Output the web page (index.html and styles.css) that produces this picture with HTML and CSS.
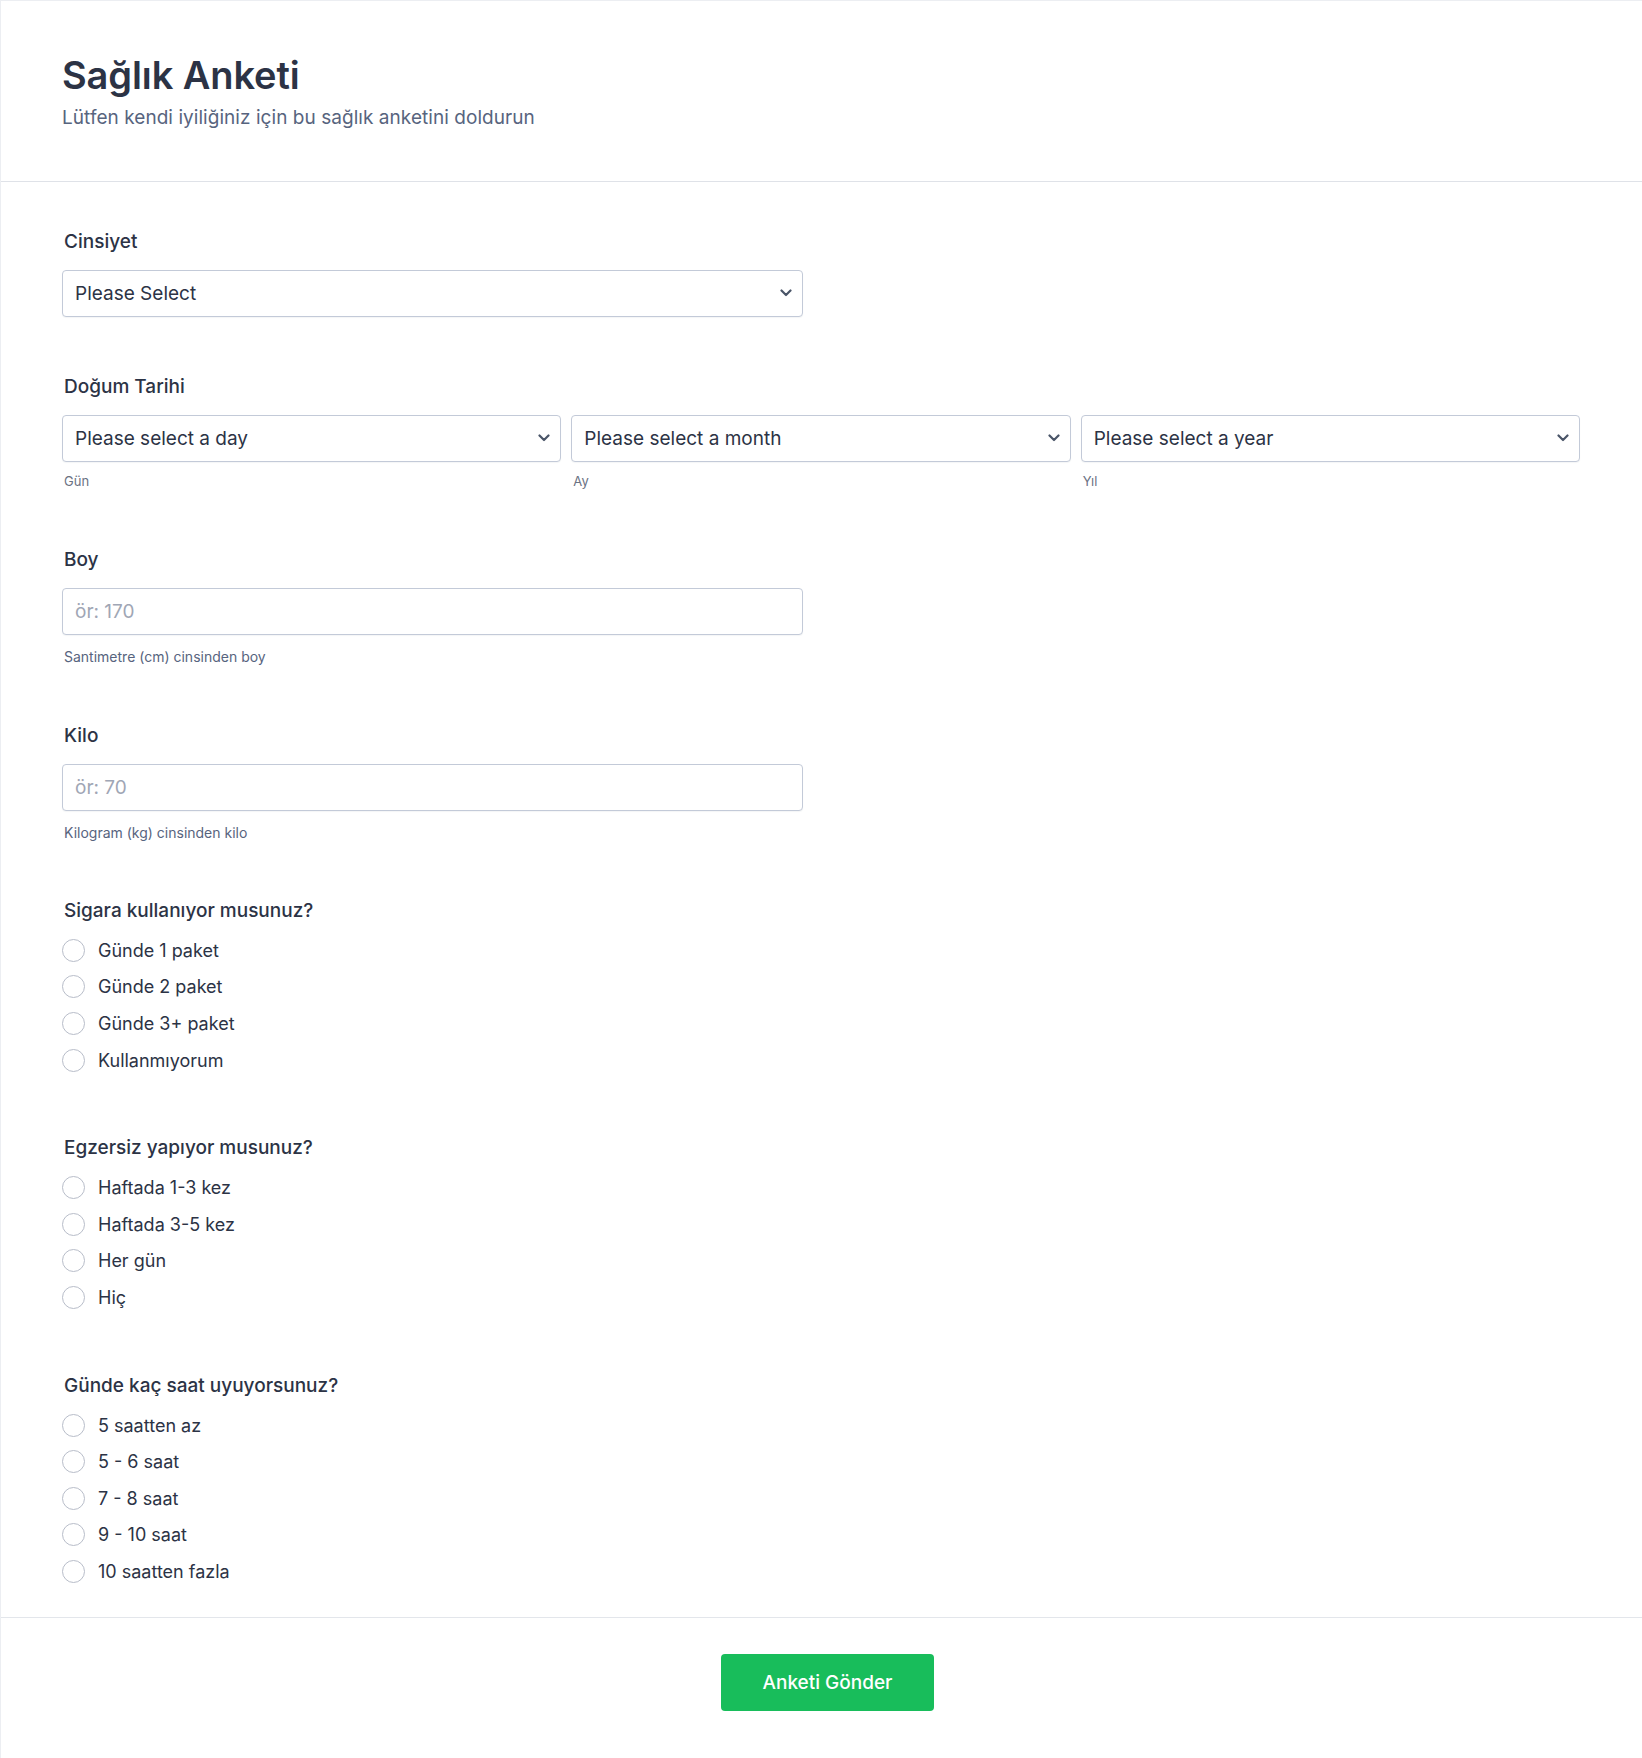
FILE: index.html
```html
<!DOCTYPE html>
<html lang="tr">
<head>
<meta charset="utf-8">
<title>Sağlık Anketi</title>
<link rel="stylesheet" href="styles.css">
</head>
<body>
<div class="survey">
  <header class="survey-header">
    <h1 class="survey-title">Sağlık Anketi</h1>
    <p class="survey-subtitle">Lütfen kendi iyiliğiniz için bu sağlık anketini doldurun</p>
  </header>

  <form class="survey-body">
    <div class="field field-first">
      <label class="field-label">Cinsiyet</label>
      <div class="select-wrap half">
        <select class="control select"><option>Please Select</option></select>
        <svg class="chevron" width="12" height="8" viewBox="0 0 12 8"><path d="M1.5 1.5 L6 6 L10.5 1.5" fill="none" stroke="#4a5568" stroke-width="2.2" stroke-linecap="round" stroke-linejoin="round"/></svg>
      </div>
    </div>

    <div class="field field-date">
      <label class="field-label">Doğum Tarihi</label>
      <div class="date-row">
        <div class="date-col">
          <div class="select-wrap">
            <select class="control select"><option>Please select a day</option></select>
            <svg class="chevron" width="12" height="8" viewBox="0 0 12 8"><path d="M1.5 1.5 L6 6 L10.5 1.5" fill="none" stroke="#4a5568" stroke-width="2.2" stroke-linecap="round" stroke-linejoin="round"/></svg>
          </div>
          <span class="sublabel">Gün</span>
        </div>
        <div class="date-col">
          <div class="select-wrap">
            <select class="control select"><option>Please select a month</option></select>
            <svg class="chevron" width="12" height="8" viewBox="0 0 12 8"><path d="M1.5 1.5 L6 6 L10.5 1.5" fill="none" stroke="#4a5568" stroke-width="2.2" stroke-linecap="round" stroke-linejoin="round"/></svg>
          </div>
          <span class="sublabel">Ay</span>
        </div>
        <div class="date-col">
          <div class="select-wrap">
            <select class="control select"><option>Please select a year</option></select>
            <svg class="chevron" width="12" height="8" viewBox="0 0 12 8"><path d="M1.5 1.5 L6 6 L10.5 1.5" fill="none" stroke="#4a5568" stroke-width="2.2" stroke-linecap="round" stroke-linejoin="round"/></svg>
          </div>
          <span class="sublabel">Yıl</span>
        </div>
      </div>
    </div>

    <div class="field field-boy">
      <label class="field-label">Boy</label>
      <input class="control input half" type="text" placeholder="ör: 170">
      <span class="help">Santimetre (cm) cinsinden boy</span>
    </div>

    <div class="field">
      <label class="field-label">Kilo</label>
      <input class="control input half" type="text" placeholder="ör: 70">
      <span class="help">Kilogram (kg) cinsinden kilo</span>
    </div>

    <div class="field field-radio">
      <label class="field-label">Sigara kullanıyor musunuz?</label>
      <div class="radio-list">
        <label class="radio-row"><input type="radio" name="sigara" class="radio"><span>Günde 1 paket</span></label>
        <label class="radio-row"><input type="radio" name="sigara" class="radio"><span>Günde 2 paket</span></label>
        <label class="radio-row"><input type="radio" name="sigara" class="radio"><span>Günde 3+ paket</span></label>
        <label class="radio-row"><input type="radio" name="sigara" class="radio"><span>Kullanmıyorum</span></label>
      </div>
    </div>

    <div class="field field-radio">
      <label class="field-label">Egzersiz yapıyor musunuz?</label>
      <div class="radio-list">
        <label class="radio-row"><input type="radio" name="egzersiz" class="radio"><span>Haftada 1-3 kez</span></label>
        <label class="radio-row"><input type="radio" name="egzersiz" class="radio"><span>Haftada 3-5 kez</span></label>
        <label class="radio-row"><input type="radio" name="egzersiz" class="radio"><span>Her gün</span></label>
        <label class="radio-row"><input type="radio" name="egzersiz" class="radio"><span>Hiç</span></label>
      </div>
    </div>

    <div class="field field-radio">
      <label class="field-label">Günde kaç saat uyuyorsunuz?</label>
      <div class="radio-list">
        <label class="radio-row"><input type="radio" name="uyku" class="radio"><span>5 saatten az</span></label>
        <label class="radio-row"><input type="radio" name="uyku" class="radio"><span>5 - 6 saat</span></label>
        <label class="radio-row"><input type="radio" name="uyku" class="radio"><span>7 - 8 saat</span></label>
        <label class="radio-row"><input type="radio" name="uyku" class="radio"><span>9 - 10 saat</span></label>
        <label class="radio-row"><input type="radio" name="uyku" class="radio"><span>10 saatten fazla</span></label>
      </div>
    </div>
  </form>

  <footer class="survey-footer">
    <button class="submit-btn" type="button">Anketi Gönder</button>
  </footer>
</div>
</body>
</html>
```
FILE: styles.css
```css
* { box-sizing: border-box; }

html, body {
  margin: 0;
  padding: 0;
  background: #ffffff;
}

body {
  font-family: Inter, "Noto Sans", "Liberation Sans", sans-serif;
  color: #2c3345;
  overflow-x: hidden;
}

.survey {
  width: 100%;
  min-height: 1758px;
  border-top: 1px solid #eceef2;
  border-left: 1px solid #eceef2;
  background: #fff;
}

.survey-header {
  padding: 51px 61px 0 61px;
  height: 181px;
  border-bottom: 1px solid #dfe2e8;
}

.survey-title {
  margin: 0;
  font-size: 38px;
  line-height: 46px;
  font-weight: 600;
  color: #2c3345;
  letter-spacing: -0.1px;
}

.survey-subtitle {
  margin: 8px 0 0 0;
  font-size: 19px;
  line-height: 24px;
  color: #57647e;
  letter-spacing: 0.05px;
}

.survey-body {
  padding: 48px 61px 27px 61px;
  border-bottom: 1px solid #e3e6eb;
}

.field {
  display: flex;
  flex-direction: column;
  align-items: flex-start;
  margin-bottom: 56px;
}
.field-first { margin-bottom: 58px; }
.field-date { margin-bottom: 59px; }
.field-boy { margin-bottom: 57px; }
.field-radio { margin-bottom: 58px; }
.field:last-child { margin-bottom: 0; }

.field-label {
  display: block;
  font-size: 19px;
  line-height: 24px;
  font-weight: 500;
  color: #2c3345;
  margin: 0 0 16px 2px;
}

.select-wrap {
  position: relative;
  width: 100%;
}
.select-wrap.half { width: 741px; }

.control {
  display: block;
  width: 100%;
  height: 47px;
  border: 1px solid #c3cad8;
  border-radius: 4px;
  background: #fff;
  padding: 0 12px;
  font-family: Inter, "Noto Sans", "Liberation Sans", sans-serif;
  font-size: 19px;
  color: #2c3345;
  outline: none;
  box-shadow: 0 1px 1px rgba(44, 51, 69, 0.05);
}

.select {
  appearance: none;
  -webkit-appearance: none;
  padding-right: 40px;
}

.input::placeholder {
  color: #a0a6b5;
}

.input.half { width: 741px; }

.chevron {
  position: absolute;
  right: 11px;
  top: 19px;
  pointer-events: none;
}

.date-row {
  display: grid;
  grid-template-columns: repeat(3, 1fr);
  column-gap: 10px;
  width: 1518px;
}

.date-col {
  display: flex;
  flex-direction: column;
}

.sublabel {
  display: block;
  margin: 11px 0 0 2px;
  font-size: 13px;
  line-height: 16px;
  color: #6b7283;
}

.help {
  display: block;
  margin: 12px 0 0 2px;
  font-size: 14px;
  line-height: 20px;
  color: #57647e;
}

.radio-list {
  display: flex;
  flex-direction: column;
  margin-top: -7px;
}

.radio-row {
  display: flex;
  align-items: center;
  height: 36.6px;
  font-size: 18px;
  color: #2c3345;
}

.radio {
  appearance: none;
  -webkit-appearance: none;
  width: 23px;
  height: 23px;
  margin: 0 13px 0 0;
  border: 1px solid #b8bdc9;
  border-radius: 50%;
  background: #fff;
  flex: none;
}

.survey-footer {
  display: flex;
  justify-content: center;
  padding: 36px 0 0 12px;
}

.submit-btn {
  width: 213px;
  height: 57px;
  border: none;
  border-radius: 4px;
  background: #18bd5b;
  color: #fff;
  font-family: Inter, "Noto Sans", "Liberation Sans", sans-serif;
  font-size: 19px;
  font-weight: 500;
  cursor: pointer;
}
```
